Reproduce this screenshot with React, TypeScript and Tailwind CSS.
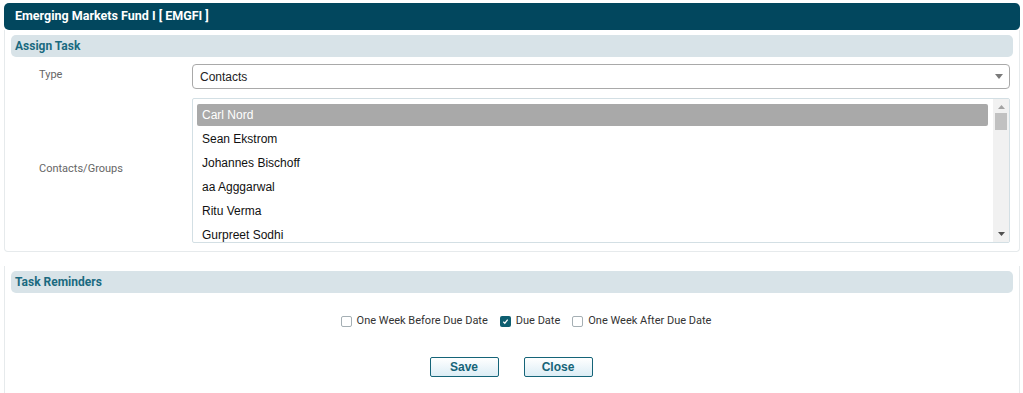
const contacts = ['Carl Nord', 'Sean Ekstrom', 'Johannes Bischoff', 'aa Agggarwal', 'Ritu Verma', 'Gurpreet Sodhi'];

const reminders = [
  { label: 'One Week Before Due Date', checked: false },
  { label: 'Due Date', checked: true },
  { label: 'One Week After Due Date', checked: false }
];

function SectionHeader({ title }: { title: string }) {
  return (
    <div className="mx-[6px] h-[22px] rounded-[5px] bg-[#d8e3e8] px-[4px] flex items-center">
      <span className="text-[12px] font-bold text-[#1a6a80]">{title}</span>
    </div>
  );
}

function Checkbox({ label, checked }: { label: string; checked: boolean }) {
  return (
    <label className="flex items-center gap-[5px] text-[11px] leading-[16px] text-[#333]">
      {checked ? (
        <span className="w-[11px] h-[11px] rounded-[2px] bg-[#0d5e70] flex items-center justify-center">
          <svg width="7" height="7" viewBox="0 0 8 8">
            <path d="M1.5 4.3 L3.2 6 L6.5 1.8" stroke="white" strokeWidth="1.4" fill="none" />
          </svg>
        </span>
      ) : (
        <span className="w-[11px] h-[11px] rounded-[2px] border border-[#a5afb4] bg-white" />
      )}
      <span>{label}</span>
    </label>
  );
}

export default function App() {
  return (
    <div className="w-[1023px] h-[393px] bg-white font-['Roboto',sans-serif] pt-[3px] overflow-hidden">
      <div className="mx-[4px] w-[1016px]">
        <div className="h-[27px] rounded-[5px] bg-[#02475e] flex items-center px-[11px]">
          <span className="text-[12.5px] font-bold text-white">Emerging Markets Fund I [ EMGFI ]</span>
        </div>

        <div className="border border-t-0 border-[#e6eaec] rounded-b-[4px] pt-[5px] pb-[8px]">
          <SectionHeader title="Assign Task" />

          <div className="flex items-center mt-[7px] h-[25px]">
            <div className="w-[187px] pl-[34px] pb-[3px] text-[11px] text-[#666]">Type</div>
            <div className="flex-1 mr-[9px] h-[25px] border border-[#a9a9a9] rounded-[4px] flex items-center justify-between pl-[7px] pr-[6px]">
              <span className="text-[12px] text-[#222] font-['Liberation_Sans',sans-serif]">Contacts</span>
              <svg width="8" height="5" viewBox="0 0 8 5"><path d="M0 0 H8 L4 5 Z" fill="#7a7a7a" /></svg>
            </div>
          </div>

          <div className="flex items-center mt-[9px]">
            <div className="w-[187px] pl-[34px] pb-[3px] text-[11px] text-[#666]">Contacts/Groups</div>
            <div className="flex-1 mr-[9px] h-[145px] border border-[#d3dfe4] rounded-[2px] flex overflow-hidden">
              <ul className="flex-1 pt-[5px] pl-[4px] pr-[5px] overflow-hidden font-['Liberation_Sans',sans-serif]">
                {contacts.map((c, i) => (
                  <li
                    key={c}
                    className={
                      i === 0
                        ? 'h-[22px] mb-[2px] rounded-[2px] bg-[#a9a9a9] text-white text-[12px] flex items-center px-[5px]'
                        : 'h-[22px] mb-[2px] text-[#111] text-[12px] flex items-center px-[5px]'
                    }
                  >
                    {c}
                  </li>
                ))}
              </ul>
              <div className="w-[16px] bg-[#f1f1f1] flex flex-col items-center">
                <svg className="mt-[6px]" width="7" height="4" viewBox="0 0 7 4"><path d="M0 4 H7 L3.5 0 Z" fill="#a3a3a3" /></svg>
                <div className="mt-[4px] w-[12px] h-[17px] bg-[#c1c1c1]" />
                <div className="flex-1" />
                <svg className="mb-[6px]" width="7" height="4" viewBox="0 0 7 4"><path d="M0 0 H7 L3.5 4 Z" fill="#505050" /></svg>
              </div>
            </div>
          </div>
        </div>

        <div className="mt-[14px] border-l border-r border-[#e6eaec] h-[140px] pt-[5px]">
          <SectionHeader title="Task Reminders" />

          <div className="flex justify-center gap-[12px] mt-[20px] pl-[28px]">
            {reminders.map((r) => (
              <Checkbox key={r.label} label={r.label} checked={r.checked} />
            ))}
          </div>

          <div className="flex justify-center gap-[25px] mt-[28px] pr-[2px]">
            {['Save', 'Close'].map((b) => (
              <button
                key={b}
                className="w-[69px] h-[20px] border border-[#156478] rounded-[2px] bg-gradient-to-b from-white to-[#dcedf5] text-[12px] font-bold text-[#156478] font-['Liberation_Sans',sans-serif]"
              >
                {b}
              </button>
            ))}
          </div>
        </div>
      </div>
    </div>
  );
}
